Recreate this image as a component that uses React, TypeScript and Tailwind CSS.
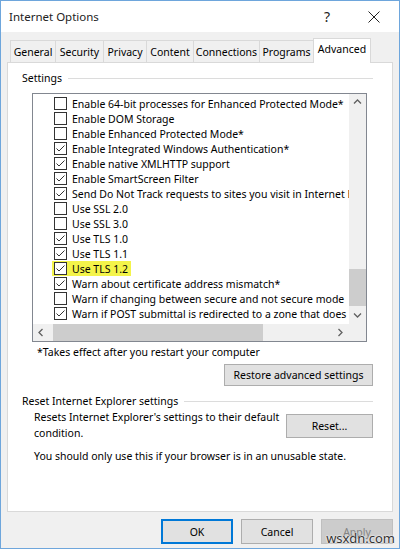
import React from 'react';

const items: { label: string; checked: boolean; highlight?: boolean }[] = [
  { label: 'Enable 64-bit processes for Enhanced Protected Mode*', checked: false },
  { label: 'Enable DOM Storage', checked: false },
  { label: 'Enable Enhanced Protected Mode*', checked: false },
  { label: 'Enable Integrated Windows Authentication*', checked: true },
  { label: 'Enable native XMLHTTP support', checked: true },
  { label: 'Enable SmartScreen Filter', checked: true },
  { label: 'Send Do Not Track requests to sites you visit in Internet Explorer*', checked: true },
  { label: 'Use SSL 2.0', checked: false },
  { label: 'Use SSL 3.0', checked: false },
  { label: 'Use TLS 1.0', checked: true },
  { label: 'Use TLS 1.1', checked: true },
  { label: 'Use TLS 1.2', checked: true, highlight: true },
  { label: 'Warn about certificate address mismatch*', checked: true },
  { label: 'Warn if changing between secure and not secure mode', checked: false },
  { label: 'Warn if POST submittal is redirected to a zone that does not permit posts', checked: true },
];

const tabs = [
  { name: 'General', w: 'w-[46px]' },
  { name: 'Security', w: 'w-[49px]' },
  { name: 'Privacy', w: 'w-[44px]' },
  { name: 'Content', w: 'w-[48px]' },
  { name: 'Connections', w: 'w-[67px]' },
  { name: 'Programs', w: 'w-[55px]' },
];

const Checkbox: React.FC<{ checked: boolean }> = ({ checked }) => (
  <div className="w-[13px] h-[13px] border border-[#333333] bg-white shrink-0 flex items-center justify-center">
    {checked && (
      <svg width="11" height="11" viewBox="0 0 11 11">
        <polyline points="1.5,5.5 4,8 9.5,2.5" fill="none" stroke="#333333" strokeWidth="1" />
      </svg>
    )}
  </div>
);

const Chevron: React.FC<{ dir: 'up' | 'down' | 'left' | 'right' }> = ({ dir }) => {
  const pts = {
    up: '1,5.5 4.5,2 8,5.5',
    down: '1,2.5 4.5,6 8,2.5',
    left: '5.5,1 2,4.5 5.5,8',
    right: '2.5,1 6,4.5 2.5,8',
  }[dir];
  return (
    <svg width="9" height="9" viewBox="0 0 9 9">
      <polyline points={pts} fill="none" stroke="#606060" strokeWidth="1.3" />
    </svg>
  );
};

const GroupHeader: React.FC<{ title: string }> = ({ title }) => (
  <div className="flex items-center h-[16px] pl-[14px] pr-[19px]">
    <span>{title}</span>
    <div className="flex-1 h-px bg-[#dcdcdc] ml-[6px]" />
  </div>
);

const Button: React.FC<{ children: React.ReactNode; className?: string }> = ({ children, className = '' }) => (
  <div className={`flex items-center justify-center bg-[#e1e1e1] border border-[#adadad] whitespace-nowrap ${className}`}>
    {children}
  </div>
);

export default function App() {
  return (
    <div className="w-[400px] h-[549px] bg-[#f0f0f0] border border-[#6ea6dc] flex flex-col relative text-[10.5px] text-black font-['Segoe_UI','Noto_Sans',sans-serif] leading-[16px] overflow-hidden">
      {/* Title bar */}
      <div className="h-[31px] bg-white flex items-center shrink-0">
        <span className="ml-[8px] text-[11.5px] text-[#222]">Internet Options</span>
        <span className="ml-auto mr-[38px] text-[14px] text-[#222]">?</span>
        <svg width="12" height="12" viewBox="0 0 12 12" className="mr-[19px]">
          <path d="M0.5 0.5 L11.5 11.5 M11.5 0.5 L0.5 11.5" stroke="#222" strokeWidth="1" />
        </svg>
      </div>

      {/* Tabs */}
      <div className="flex items-end h-[29px] pl-[9px] shrink-0 mt-[1px]">
        {tabs.map((t) => (
          <div
            key={t.name}
            className={`${t.w} h-[22px] flex items-center justify-center border border-[#d9d9d9] border-b-0 -ml-px first:ml-0 bg-[#f0f0f0]`}
          >
            {t.name}
          </div>
        ))}
        <div className="w-[58px] h-[25px] flex items-start justify-center pt-[2px] bg-white border border-[#d9d9d9] border-b-0 -ml-px relative z-10 -mb-px">
          Advanced
        </div>
      </div>

      {/* Panel */}
      <div className="mx-[6px] h-[450px] bg-white border border-[#d9d9d9] flex flex-col shrink-0">
        <div className="mt-[7px]">
          <GroupHeader title="Settings" />
        </div>

        {/* List box */}
        <div className="ml-[24px] mt-[7px] w-[335px] h-[249px] border border-[#828790] flex flex-col">
          <div className="flex h-[230px]">
            <div className="w-[316px] overflow-hidden pt-[2px]">
              {items.map((it) => (
                <div key={it.label} className="h-[15px] flex items-center pl-[21px] whitespace-nowrap">
                  <div className={`flex items-center h-[15px] pl-[2px] pr-[3px] -ml-[2px] ${it.highlight ? 'bg-[#f4f44a]' : ''}`}>
                    <Checkbox checked={it.checked} />
                    <span className="ml-[5px]">{it.label}</span>
                  </div>
                </div>
              ))}
            </div>
            <div className="w-[17px] bg-[#f0f0f0] flex flex-col items-center">
              <div className="h-[17px] flex items-center justify-center">
                <Chevron dir="up" />
              </div>
              <div className="flex-1 w-full flex flex-col">
                <div className="h-[158px]" />
                <div className="h-[37px] w-full bg-[#cdcdcd]" />
                <div className="flex-1" />
              </div>
              <div className="h-[17px] flex items-center justify-center">
                <Chevron dir="down" />
              </div>
            </div>
          </div>
          <div className="flex h-[17px]">
            <div className="w-[316px] bg-[#f0f0f0] flex items-center">
              <div className="w-[17px] flex items-center justify-center">
                <Chevron dir="left" />
              </div>
              <div className="flex-1 h-full flex">
                <div className="w-[3px]" />
                <div className="w-[210px] h-full bg-[#cdcdcd]" />
                <div className="flex-1" />
              </div>
              <div className="w-[17px] flex items-center justify-center">
                <Chevron dir="right" />
              </div>
            </div>
            <div className="w-[17px] bg-[#f0f0f0]" />
          </div>
        </div>

        <div className="mt-[2px] pl-[29px]">*Takes effect after you restart your computer</div>

        <div className="flex justify-end pr-[19px] mt-[4px]">
          <Button className="w-[149px] h-[22px]">Restore advanced settings</Button>
        </div>

        <div className="mt-[7px]">
          <GroupHeader title="Reset Internet Explorer settings" />
        </div>

        <div className="flex pl-[26px] pr-[19px]">
          <div className="w-[250px]">
            Resets Internet Explorer&apos;s settings to their default condition.
          </div>
          <Button className="ml-auto mt-[5px] w-[87px] h-[24px]">Reset...</Button>
        </div>

        <div className="pl-[26px] mt-[7px]">You should only use this if your browser is in an unusable state.</div>
      </div>

      {/* Bottom buttons */}
      <div className="flex justify-end gap-[8px] pr-[6px] mt-[7px]">
        <Button className="w-[72px] h-[25px] !border-[#0078d7] border-2">OK</Button>
        <Button className="w-[72px] h-[25px]">Cancel</Button>
        <Button className="w-[72px] h-[25px] !bg-[#cccccc] !border-[#bfbfbf] text-[#838383]">Apply</Button>
      </div>

      <span className="absolute right-[4px] bottom-[2px] text-[13px] text-[#333] [text-shadow:0_0_2px_#fff,0_0_2px_#fff]">wsxdn.com</span>
    </div>
  );
}
